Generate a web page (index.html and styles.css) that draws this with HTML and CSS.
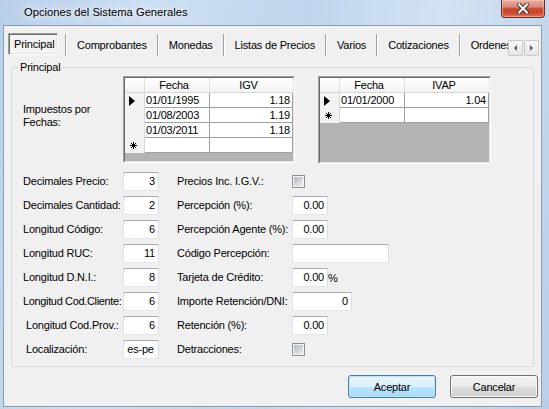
FILE: index.html
```html
<!DOCTYPE html>
<html>
<head>
<meta charset="utf-8">
<title>Opciones del Sistema Generales</title>
<link rel="stylesheet" href="styles.css">
</head>
<body>
<div class="window">
  <div class="titlebar">
    <span class="title">Opciones del Sistema Generales</span>
    <div class="close">
      <svg width="12" height="11" viewBox="0 0 12 11"><path d="M2 1.5 L10 9.5 M10 1.5 L2 9.5" stroke="#47322e" stroke-width="4" stroke-linecap="square"/><path d="M2 1.5 L10 9.5 M10 1.5 L2 9.5" stroke="#ffffff" stroke-width="2" stroke-linecap="square"/></svg>
    </div>
  </div>
  <div class="frame">
    <div class="client">
      <div class="tabbar">
        <div class="tabtrack">
          <div class="tab sel">Principal</div>
          <span class="tsep"></span><div class="tab">Comprobantes</div>
          <span class="tsep"></span><div class="tab">Monedas</div>
          <span class="tsep"></span><div class="tab">Listas de Precios</div>
          <span class="tsep"></span><div class="tab">Varios</div>
          <span class="tsep"></span><div class="tab">Cotizaciones</div>
          <span class="tsep"></span><div class="tab">Ordenes</div>
        </div>
        <div class="tscroll">
          <span class="sbtn"><span class="arr arr-l"></span></span>
          <span class="sbtn"><span class="arr arr-r"></span></span>
        </div>
      </div>

      <fieldset class="group">
        <legend>Principal</legend>
        <div class="gbody">
          <div class="taxes">
            <div class="tax-label">Impuestos por<br>Fechas:</div>
            <div class="dgv g1">
              <div class="dgv-in">
                <div class="dgv-grid">
                  <div class="hdr rhh"></div><div class="hdr">Fecha</div><div class="hdr">IGV</div>
                  <div class="rh"><span class="tri"></span></div><div class="cell">01/01/1995</div><div class="cell num">1.18</div>
                  <div class="rh"></div><div class="cell">01/08/2003</div><div class="cell num">1.19</div>
                  <div class="rh"></div><div class="cell">01/03/2011</div><div class="cell num">1.18</div>
                  <div class="rh"><svg class="star" width="7" height="7" viewBox="0 0 7 7"><path d="M3.5 0 V7 M0 3.5 H7 M1 1 L6 6 M6 1 L1 6" stroke="#000" stroke-width="1"/></svg></div><div class="cell"></div><div class="cell num"></div>
                </div>
              </div>
            </div>
            <div class="dgv g2">
              <div class="dgv-in">
                <div class="dgv-grid">
                  <div class="hdr rhh"></div><div class="hdr">Fecha</div><div class="hdr">IVAP</div>
                  <div class="rh"><span class="tri"></span></div><div class="cell">01/01/2000</div><div class="cell num">1.04</div>
                  <div class="rh"><svg class="star" width="7" height="7" viewBox="0 0 7 7"><path d="M3.5 0 V7 M0 3.5 H7 M1 1 L6 6 M6 1 L1 6" stroke="#000" stroke-width="1"/></svg></div><div class="cell"></div><div class="cell num"></div>
                </div>
              </div>
            </div>
          </div>

          <div class="form">
            <div class="lbl">Decimales Precio:</div><div class="tb">3</div>
            <div class="lbl2">Precios Inc. I.G.V.:</div><div class="ctl"><span class="chk"></span></div>

            <div class="lbl">Decimales Cantidad:</div><div class="tb">2</div>
            <div class="lbl2">Percepción (%):</div><div class="ctl"><span class="tb">0.00</span></div>

            <div class="lbl">Longitud Código:</div><div class="tb">6</div>
            <div class="lbl2">Percepción Agente (%):</div><div class="ctl"><span class="tb">0.00</span></div>

            <div class="lbl">Longitud RUC:</div><div class="tb">11</div>
            <div class="lbl2">Código Percepción:</div><div class="ctl"><span class="tb tb-wide"></span></div>

            <div class="lbl">Longitud D.N.I.:</div><div class="tb">8</div>
            <div class="lbl2">Tarjeta de Crédito:</div><div class="ctl"><span class="tb">0.00</span><span class="pct">%</span></div>

            <div class="lbl tight">Longitud Cod.Cliente:</div><div class="tb">6</div>
            <div class="lbl2">Importe Retención/DNI:</div><div class="ctl"><span class="tb tb-mid">0</span></div>

            <div class="lbl indent">Longitud Cod.Prov.:</div><div class="tb">6</div>
            <div class="lbl2">Retención (%):</div><div class="ctl"><span class="tb">0.00</span></div>

            <div class="lbl indent">Localización:</div><div class="tb tb-center">es-pe</div>
            <div class="lbl2">Detracciones:</div><div class="ctl"><span class="chk"></span></div>
          </div>
        </div>
      </fieldset>

      <div class="buttons">
        <div class="btn btn-default">Aceptar</div>
        <div class="btn">Cancelar</div>
      </div>
    </div>
  </div>
</div>
</body>
</html>
```

FILE: styles.css
```css
html, body {
  margin: 0;
  padding: 0;
}

body {
  width: 549px;
  height: 409px;
  overflow: hidden;
  font-family: "Liberation Sans", Arial, sans-serif;
  font-size: 11px;
  color: #000;
  background: linear-gradient(100deg, #b9d0ea 0%, #cddff2 25%, #bfd5ed 50%, #d3e3f3 72%, #b8cfe9 100%);
}

.window {
  display: flex;
  flex-direction: column;
  height: 409px;
}

/* ---------- title bar ---------- */
.titlebar {
  height: 25px;
  display: flex;
  align-items: flex-start;
  flex: none;
}

.title {
  padding: 5px 0 0 24px;
  font-size: 11.2px;
  line-height: 14px;
  text-shadow: 0 0 6px #fff, 0 0 10px #fff;
}

.close {
  margin-left: auto;
  margin-right: 4px;
  width: 44px;
  height: 18px;
  box-sizing: border-box;
  border: 1px solid #6e2b22;
  border-top: none;
  border-radius: 0 0 4px 4px;
  background: linear-gradient(#eab0a3 0%, #d98a7a 40%, #c7462f 52%, #cc4a31 78%, #e07a5b 100%);
  box-shadow: inset 0 0 0 1px rgba(255, 200, 190, 0.5);
  display: flex;
  align-items: center;
  justify-content: center;
}

/* ---------- frame / client ---------- */
.frame {
  flex: 1;
  display: flex;
  padding: 0 7px 2px 3px;
}

.client {
  flex: 1;
  display: flex;
  flex-direction: column;
  background: #f0f0f0;
  border: 1px solid #8a9db5;
  letter-spacing: -0.2px;
}

/* ---------- tabs ---------- */
.tabbar {
  display: flex;
  height: 23px;
  margin: 7px 0 0 4px;
  flex: none;
}

.tabtrack {
  flex: none;
  width: 500px;
  display: flex;
  overflow: hidden;
}

.tab {
  flex: none;
  display: flex;
  align-items: center;
  padding: 0 10px 0 10px;
  white-space: nowrap;
}

.tab.sel {
  width: 50px;
  box-sizing: border-box;
  padding: 0 0 0 5px;
  margin-right: 7px;
  height: 22px;
  border: 1px solid;
  border-color: #a0a0a0 #ffffff #ffffff #a0a0a0;
  box-shadow: inset 1px 1px 0 #696969, inset -1px -1px 0 #e3e3e3;
  background: #f4f4f4;
}

.tsep {
  flex: none;
  width: 1px;
  background: #a0a0a0;
  border-right: 1px solid #ffffff;
  margin-top: 1px;
}

.tscroll {
  display: flex;
  align-self: flex-end;
  gap: 1px;
}

.sbtn {
  width: 15px;
  height: 16px;
  box-sizing: border-box;
  border: 1px solid #c9c9c9;
  border-radius: 1px;
  background: linear-gradient(#f8f8f8, #e6e6e6);
  display: flex;
  align-items: center;
  justify-content: center;
}

.arr {
  width: 0;
  height: 0;
  border-top: 3px solid transparent;
  border-bottom: 3px solid transparent;
}

.arr-l { border-right: 3px solid #4a5f80; }
.arr-r { border-left: 3px solid #4a5f80; }

/* ---------- group box ---------- */
.group {
  margin: 4px 7px 0 7px;
  padding: 0;
  border: 1px solid #d3dbe0;
  border-radius: 3px;
  min-width: 0;
}

.group legend {
  margin-left: 6px;
  padding: 0 2px;
  line-height: 14px;
}

.gbody {
  padding: 2px 0 2px 11px;
}

.taxes {
  display: flex;
  align-items: flex-start;
}

.tax-label {
  width: 100px;
  margin-top: 27px;
  line-height: 13px;
}

/* ---------- data grids ---------- */
.dgv {
  box-sizing: border-box;
  border: 1px solid;
  border-color: #a0a0a0 #ffffff #ffffff #a0a0a0;
  display: flex;
}

.g1 { width: 172px; height: 87px; }
.g2 { width: 173px; height: 88px; margin-left: 23px; }

.dgv-in {
  flex: 1;
  border: 1px solid;
  border-color: #696969 #e3e3e3 #e3e3e3 #696969;
  background: #b4b4b4;
}

.dgv-grid {
  display: grid;
  grid-template-columns: 20px 65px 1fr;
  grid-auto-rows: 15px;
  line-height: 14px;
}

.hdr {
  background: linear-gradient(#ffffff, #f3f3f3);
  text-align: center;
  border-right: 1px solid #dedede;
  border-bottom: 1px solid #d5d5d5;
  box-sizing: border-box;
  padding-right: 6px;
}

.hdr:nth-child(3n) {
  border-right: none;
}

.rhh {
  padding: 0;
}

.rh {
  background: #f2f2f2;
  border-right: 1px solid #d8d8d8;
  display: flex;
  align-items: center;
  padding-left: 4px;
}

.cell {
  background: #ffffff;
  border-right: 1px solid #a0a0a0;
  border-bottom: 1px solid #a0a0a0;
  box-sizing: border-box;
  padding-left: 1px;
  white-space: nowrap;
}

.cell.num {
  text-align: right;
  padding-right: 2px;
}

.tri {
  width: 0;
  height: 0;
  border-left: 6px solid #000;
  border-top: 5px solid transparent;
  border-bottom: 5px solid transparent;
}

.star {
  display: block;
  margin-left: 1px;
}

/* ---------- form ---------- */
.form {
  display: grid;
  grid-template-columns: 100px 36px 133px auto;
  grid-auto-rows: 24px;
  margin-top: 8px;
  align-items: start;
}

.lbl, .lbl2 {
  line-height: 18px;
  white-space: nowrap;
}

.lbl.tight {
  letter-spacing: -0.35px;
}

.lbl.indent {
  padding-left: 3px;
}

.lbl2 {
  padding-left: 18px;
}

.ctl {
  display: flex;
  align-items: center;
  height: 19px;
}

.tb {
  box-sizing: border-box;
  width: 36px;
  height: 19px;
  border: 1px solid;
  border-color: #abadb3 #dbdfe6 #e3e9ef #e2e3ea;
  background: #ffffff;
  text-align: right;
  padding: 0 3px;
  line-height: 17px;
  display: block;
}

.tb-wide { width: 97px; }
.tb-mid { width: 60px; }
.tb-center { text-align: center; padding: 0 1px 0 0; }

.pct {
  margin-left: 0;
}

.chk {
  width: 13px;
  height: 13px;
  box-sizing: border-box;
  border: 1px solid #8e8f8f;
  padding: 1px;
  background: linear-gradient(135deg, #b3b8be, #eeeeee) content-box, #f7f7f7;
}

/* ---------- buttons ---------- */
.buttons {
  display: flex;
  justify-content: flex-end;
  gap: 14px;
  margin: 8px 3px 0 0;
}

.btn {
  width: 88px;
  height: 23px;
  box-sizing: border-box;
  border: 1px solid #707070;
  border-radius: 3px;
  background: linear-gradient(#f2f2f2 0%, #ebebeb 50%, #dddddd 50%, #cfcfcf 100%);
  box-shadow: inset 0 0 0 1px #fcfcfc;
  display: flex;
  align-items: center;
  justify-content: center;
}

.btn-default {
  border-color: #3c7fb1;
  background: linear-gradient(#eaf6fd 0%, #d9f0fc 50%, #bee6fd 50%, #a7d9f5 100%);
  box-shadow: inset 0 0 0 1px #c4e5f6;
}
```
